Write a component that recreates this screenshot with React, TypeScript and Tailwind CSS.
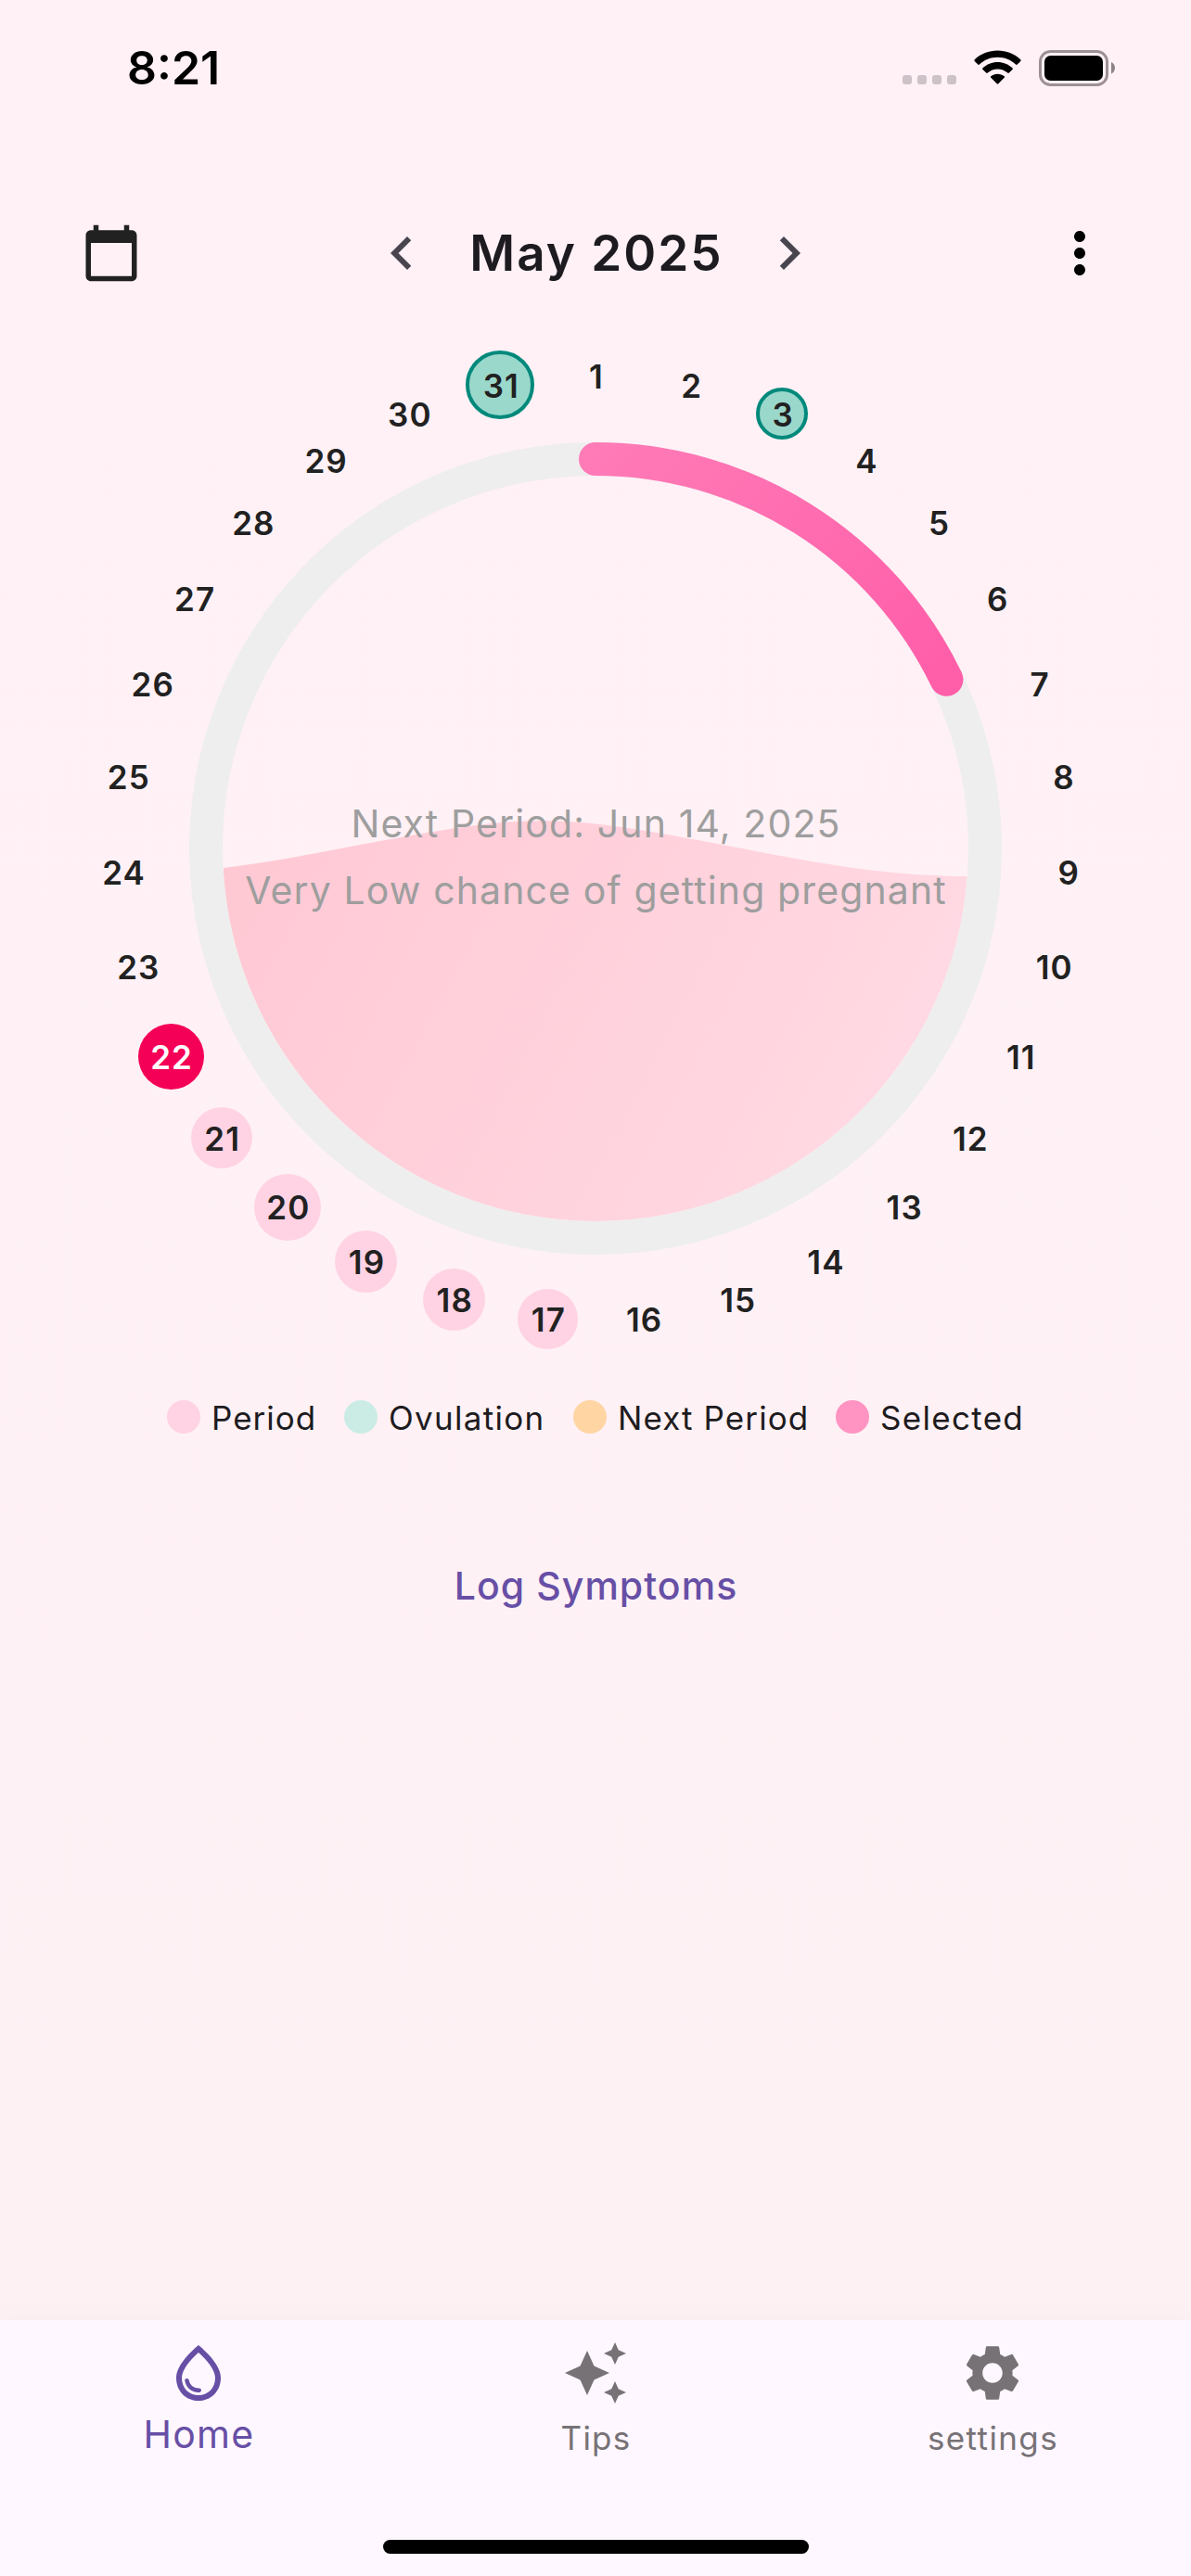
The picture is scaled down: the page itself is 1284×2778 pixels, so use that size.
import React from "react";
import {
  MdAutoAwesome,
  MdCalendarToday,
  MdChevronLeft,
  MdChevronRight,
  MdMoreVert,
  MdOutlineWaterDrop,
  MdSettings,
} from "react-icons/md";

const SIZE = 1284;
const CENTER_X = 642;
const CENTER_Y = 555;
const DAY_RADIUS = 510;
const RING_RADIUS = 420;

type Mark = { diameter: number; className: string };

const marks: Record<number, Mark> = {
  3: { diameter: 56, className: "bg-[#9bd8cc] border-4 border-[#00897b]" },
  31: { diameter: 74, className: "bg-[#9bd8cc] border-4 border-[#00897b]" },
  17: { diameter: 65, className: "bg-[#ffd3e3]" },
  18: { diameter: 67, className: "bg-[#ffd3e3]" },
  19: { diameter: 67, className: "bg-[#ffd3e3]" },
  20: { diameter: 72, className: "bg-[#ffd3e3]" },
  21: { diameter: 66, className: "bg-[#ffd3e3]" },
  22: { diameter: 71, className: "bg-[#f50057]" },
};

const days = Array.from({ length: 31 }, (_, i) => {
  const angle = (i / 31) * Math.PI * 2;
  return {
    day: i + 1,
    x: CENTER_X + Math.sin(angle) * DAY_RADIUS,
    y: CENTER_Y - Math.cos(angle) * DAY_RADIUS,
  };
});

const legend = [
  { label: "Period", dot: "bg-[#ffd3e3]", text: "w-[119px] tracking-[1px]" },
  { label: "Ovulation", dot: "bg-[#cbece5]", text: "w-[175px] tracking-[1.300px]" },
  { label: "Next Period", dot: "bg-[#ffd5a3]", text: "w-[211px] tracking-[1.100px]" },
  { label: "Selected", dot: "bg-[#ff94c2]", text: "w-[155px] tracking-[1.300px]" },
];

function StatusBar() {
  return (
    <div className="flex h-[144px] items-start justify-between pr-[81px] pl-[137px]">
      <div className="mt-[42px] text-[50px] leading-[62px] font-semibold text-black">8:21</div>
      <div className="mt-[52px] flex h-[42px] items-center">
        <div className="mt-[26px] flex gap-[6px]">
          {[0, 1, 2, 3].map((i) => (
            <span key={i} className="size-[10px] rounded-[3px] bg-[#cdc2c7]" />
          ))}
        </div>
        <svg className="ml-[19px] h-[38px] w-[51px]" viewBox="0 0 51 38">
          <path d="M25.500 0.500C35 0.500 43.800 4 50.300 10.300c.5.5.5 1.100 0 1.600l-3.600 3.700c-.5.5-1.100.5-1.600 0C39.800 10.500 32.900 7.800 25.500 7.800S11.200 10.500 5.900 15.600c-.5.5-1.100.5-1.600 0L.7 11.900c-.5-.5-.5-1.100 0-1.600C7.200 4 16 .5 25.500.5Z" />
          <path d="M25.500 13c6.100 0 11.700 2.300 16 6.300.5.500.5 1.100 0 1.600l-3.700 3.700c-.4.400-1 .4-1.500 0-2.900-2.700-6.700-4.200-10.800-4.200s-7.900 1.500-10.800 4.200c-.5.400-1.100.4-1.500 0l-3.700-3.700c-.5-.5-.5-1.100 0-1.600 4.300-4 9.900-6.300 16-6.300Z" />
          <path d="M25.500 25.700c2.700 0 5.200 1 7.200 2.600.5.400.5 1.100 0 1.500l-6.400 6.500c-.5.500-1.100.5-1.600 0l-6.400-6.500c-.4-.4-.5-1.100 0-1.500 2-1.600 4.500-2.600 7.200-2.600Z" />
        </svg>
        <svg className="ml-[19px] h-[39px] w-[83px]" viewBox="0 0 83 39">
          <rect x="1.500" y="1.500" width="72" height="36" rx="11" fill="none" stroke="#9d9195" strokeWidth="3" />
          <rect x="6" y="6" width="63" height="27" rx="6.500" />
          <path d="M78 13c2.600 1 4 3.600 4 6.300S80.600 24.600 78 25.600Z" fill="#8d8387" />
        </svg>
      </div>
    </div>
  );
}

function Header() {
  return (
    <div className="flex h-[216px] items-center justify-between px-[84px] pt-[42px]">
      <div className="flex size-[72px] items-center justify-center">
        <MdCalendarToday className="size-[66px] text-[#212121]" />
      </div>
      <div className="flex items-center">
        <MdChevronLeft className="size-[72px] text-[#49454f]" />
        <h1 className="w-[346px] pl-[2px] text-center text-[53px] leading-[64px] font-semibold tracking-[2px] text-[#1d1b20]">
          May 2025
        </h1>
        <MdChevronRight className="size-[72px] text-[#49454f]" />
      </div>
      <MdMoreVert className="size-[72px] text-black" />
    </div>
  );
}

function CycleWheel() {
  const end = (64.29 * Math.PI) / 180;
  const endX = CENTER_X + Math.sin(end) * RING_RADIUS;
  const endY = CENTER_Y - Math.cos(end) * RING_RADIUS;
  return (
    <div className="relative h-[1126px] w-full">
      <svg className="block h-[1126px] w-full" viewBox={`0 0 ${SIZE} 1126`}>
        <defs>
          <linearGradient id="arc" gradientUnits="userSpaceOnUse" x1="222" y1="135" x2="1062" y2="975">
            <stop offset="0" stopColor="#ff8ec0" />
            <stop offset="0.600" stopColor="#ff5fa9" />
            <stop offset="1" stopColor="#ff4fa0" />
          </linearGradient>
          <linearGradient id="wave" gradientUnits="userSpaceOnUse" x1="240" y1="540" x2="1044" y2="960">
            <stop offset="0" stopColor="#ffc8d3" />
            <stop offset="1" stopColor="#ffdce6" />
          </linearGradient>
          <clipPath id="inner">
            <circle cx={CENTER_X} cy={CENTER_Y} r="402" />
          </clipPath>
        </defs>
        <path
          clipPath="url(#inner)"
          fill="url(#wave)"
          d="M240 576C300 569 350 558 410 547C470 536 530 525 585 525C650 525 730 542 800 555C880 571 960 585 1044 585V960H240Z"
        />
        <circle cx={CENTER_X} cy={CENTER_Y} r={RING_RADIUS} fill="none" stroke="#eeeeee" strokeWidth="36" />
        <path
          d={`M${CENTER_X} ${CENTER_Y - RING_RADIUS}A${RING_RADIUS} ${RING_RADIUS} 0 0 1 ${endX} ${endY}`}
          fill="none"
          stroke="url(#arc)"
          strokeWidth="36"
          strokeLinecap="round"
        />
      </svg>
      <div className="absolute inset-x-0 top-[496px] flex flex-col items-center gap-[8px] pl-[1px] text-[41px] leading-[64px] tracking-[1.120px] whitespace-nowrap text-[#9e9e9e]">
        <p>Next Period: Jun 14, 2025</p>
        <p>Very Low chance of getting pregnant</p>
      </div>
      {days.map(({ day, x, y }) => {
        const mark = marks[day];
        const d = mark ? mark.diameter : 56;
        return (
          <div
            key={day}
            className={`absolute flex items-center justify-center rounded-full text-[35px] leading-none font-semibold tracking-[1.100px] ${
              mark ? mark.className : ""
            } ${day === 22 ? "text-white" : "text-[#212121]"}`}
            style={{ left: x - d / 2, top: y - d / 2, width: d, height: d }}
          >
            <span className="mt-[2px] ml-[2px]">{day}</span>
          </div>
        );
      })}
    </div>
  );
}

function Legend() {
  return (
    <div className="flex h-[84px] items-center justify-center gap-[24px]">
      {legend.map(({ label, dot, text }) => (
        <div key={label} className="flex items-center gap-[12px]">
          <span className={`size-[36px] rounded-full ${dot}`} />
          <span className={`${text} pt-[2px] text-[35px] leading-[48px] whitespace-nowrap text-[#1d1b20]`}>
            {label}
          </span>
        </div>
      ))}
    </div>
  );
}

function BottomNav() {
  return (
    <nav className="flex h-[276px] flex-col bg-[#fef7ff] shadow-[0_-4px_24px_rgba(0,0,0,0.025)]">
      <div className="grid grid-cols-3">
        <div className="flex flex-col items-center pt-[21px] text-[#674fa6]">
          <MdOutlineWaterDrop className="size-[72px]" />
          <span className="mt-[3px] pl-[1px] text-[41px] leading-[54px] tracking-[1.300px]">Home</span>
        </div>
        <div className="flex flex-col items-center pt-[21px] text-[#777276]">
          <MdAutoAwesome className="size-[72px]" />
          <span className="mt-[10px] pl-[1px] text-[35px] leading-[48px] tracking-[1.200px]">Tips</span>
        </div>
        <div className="flex flex-col items-center pt-[21px] text-[#777276]">
          <MdSettings className="size-[72px]" />
          <span className="mt-[10px] pl-[1px] text-[35px] leading-[48px] tracking-[1.400px]">settings</span>
        </div>
      </div>
      <div className="mx-auto mt-auto mb-[24px] h-[15px] w-[459px] rounded-full bg-black" />
    </nav>
  );
}

export default function App() {
  return (
    <div className="flex h-[2778px] w-[1284px] flex-col overflow-hidden bg-linear-to-b from-[#fff1f6] to-[#fef1f4] font-['Inter',sans-serif]">
      <StatusBar />
      <Header />
      <CycleWheel />
      <Legend />
      <div className="mt-[107px] flex justify-center">
        <button className="pl-[1px] text-[41px] leading-[66px] font-medium tracking-[1.050px] text-[#674fa6]">
          Log Symptoms
        </button>
      </div>
      <div className="grow" />
      <BottomNav />
    </div>
  );
}
